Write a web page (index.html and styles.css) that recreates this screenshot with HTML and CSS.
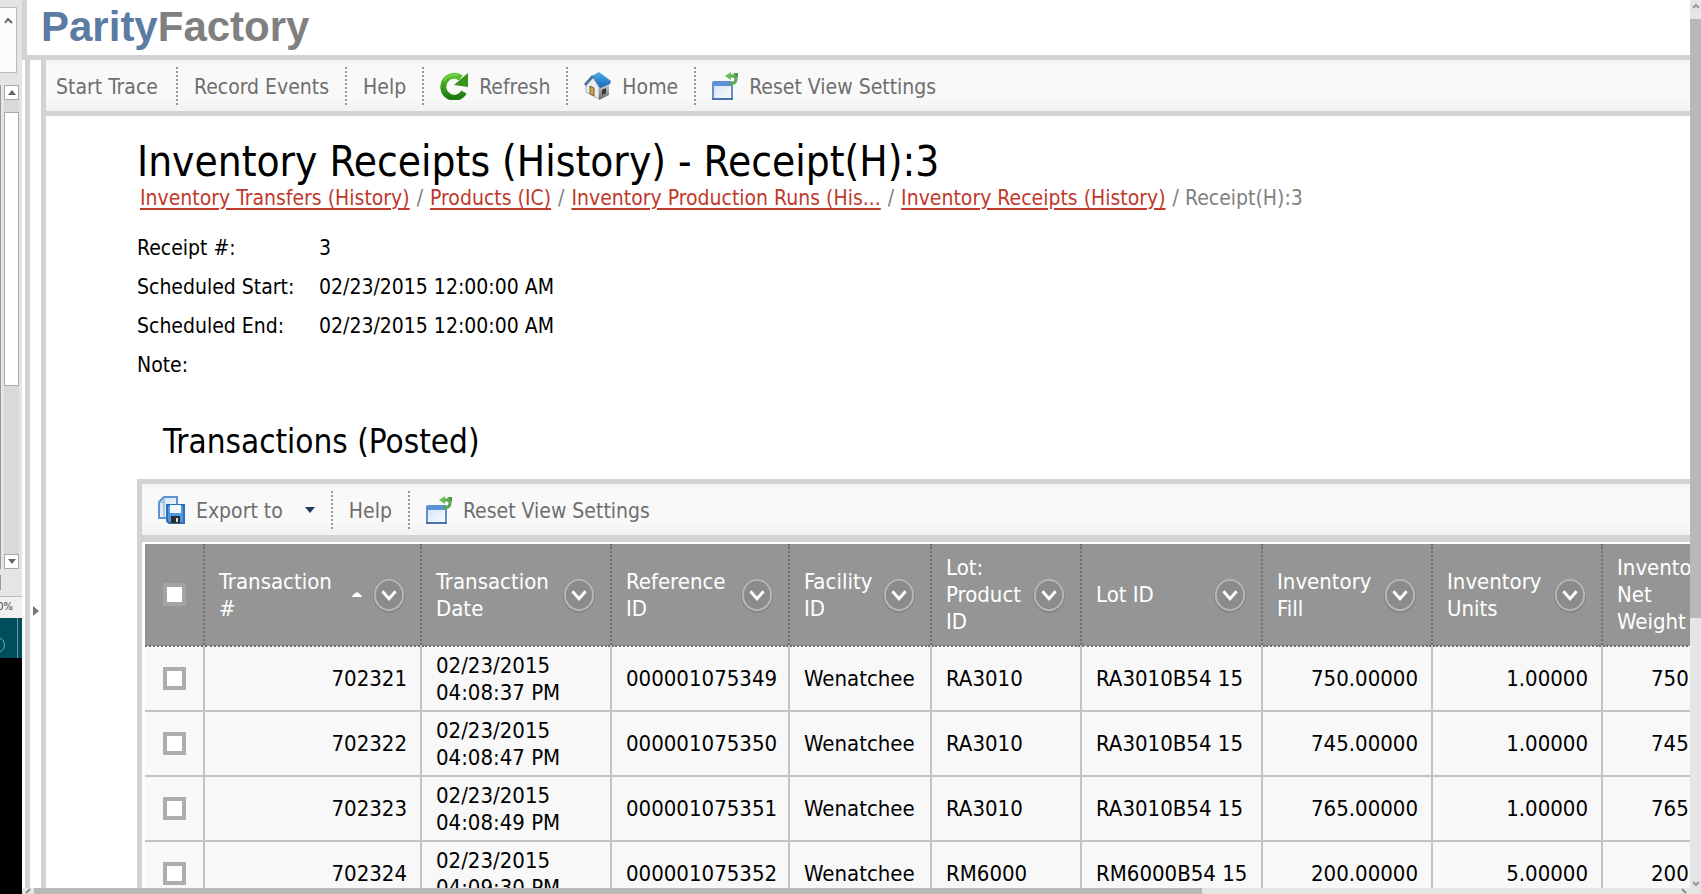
FILE: index.html
```
<!DOCTYPE html>
<html lang="en">
<head>
    <meta charset="UTF-8">
    <title>Inventory Receipts (History) - Receipt(H):3</title>
    <meta name="viewport" content="width=device-width, initial-scale=1.0">
    <link rel="stylesheet" href="styles.css">
</head>
<body>
    <svg class="defs" aria-hidden="true">
        <defs>
            <linearGradient id="green" x1="0" y1="0" x2="0" y2="1">
                <stop offset="0" stop-color="#5cc431"/>
                <stop offset="1" stop-color="#1c7a10"/>
            </linearGradient>
            <linearGradient id="blue" x1="0" y1="0" x2="0" y2="1">
                <stop offset="0" stop-color="#4dabee"/>
                <stop offset="1" stop-color="#1467b4"/>
            </linearGradient>
            <linearGradient id="pale" x1="0" y1="0" x2="1" y2="1">
                <stop offset="0" stop-color="#cfe0f5"/>
                <stop offset="1" stop-color="#fdfeff"/>
            </linearGradient>
            <linearGradient id="wall" x1="0" y1="0" x2="0" y2="1">
                <stop offset="0" stop-color="#d8d8da"/>
                <stop offset="1" stop-color="#606060"/>
            </linearGradient>
        </defs>
        <symbol id="icon-down" viewBox="0 0 36 38">
            <ellipse cx="18" cy="20" rx="17" ry="18" fill="#868686"/>
            <ellipse cx="18" cy="19" rx="15" ry="16" fill="#8b8b8b" stroke="#b8b8b8" stroke-width="2"/>
            <path d="M11 15l7 8 7-8" fill="none" stroke="#fff" stroke-width="3"/>
        </symbol>
        <symbol id="icon-reset" viewBox="0 0 26 28">
            <rect x="1" y="10" width="19" height="17" rx="1" fill="url(#pale)" stroke="#6590cc" stroke-width="2"/>
            <path d="M1 9h19v5H1z" fill="#5e92d8"/>
            <path d="M0 27h21" stroke="#4a72ad" stroke-width="2"/>
            <path d="M17 4h4q3 0 3 3 0 5-7 5" fill="none" stroke="#59a84e" stroke-width="3"/>
            <path d="M13 4l6-4v8z" fill="#6cbd5c"/>
            <path d="M21 1h5v5z" fill="#4a9640"/>
        </symbol>
    </svg>

    <div class="desktop">
        <aside class="behind">
            <div class="behind-box">
                <svg width="9" height="7" viewBox="0 0 9 7"><path d="M1 6l3-4 4 4" fill="none" stroke="#666" stroke-width="2"/></svg>
            </div>
            <div class="behind-track">
                <div class="track-button"><svg width="8" height="5" viewBox="0 0 8 5"><path d="M0 5l4-5 4 5z" fill="#666"/></svg></div>
                <div class="track-thumb"></div>
                <div class="track-button track-end"><svg width="8" height="5" viewBox="0 0 8 5"><path d="M0 0l4 5 4-5z" fill="#666"/></svg></div>
            </div>
            <div class="behind-tab"></div>
            <div class="behind-zoom">0%</div>
            <div class="behind-task"><span></span></div>
            <div class="behind-screen"></div>
        </aside>

        <div class="window">
            <header class="banner"><span class="brand">Parity</span>Factory</header>
            <div class="frame">
                <div class="splitter">
                    <svg width="6" height="10" viewBox="0 0 6 10"><path d="M0 0l6 5-6 5z" fill="#777"/></svg>
                </div>
                <main class="content">
                    <nav class="toolbar">
                        <button class="tool first">Start Trace</button>
                        <button class="tool">Record Events</button>
                        <button class="tool">Help</button>
                        <button class="tool">
                            <svg width="28" height="28" viewBox="0 0 28 28">
                                <path d="M24 20a11 11 0 1 1-3-14" fill="none" stroke="url(#green)" stroke-width="6"/>
                                <path d="M28 1v14l-14-2z" fill="#36931c"/>
                                <path d="M4 9q5-8 14-6" fill="none" stroke="#8bdf62"/>
                            </svg>
                            Refresh
                        </button>
                        <button class="tool">
                            <svg width="27" height="28" viewBox="0 0 27 28">
                                <path d="M2 11l6-6 7 10v12L2 20z" fill="#e9edf2" stroke="#a9afb8"/>
                                <path d="M15 15l10-4v12l-10 5z" fill="url(#wall)"/>
                                <path d="M8 4l7-4 12 9-1 3-10 4z" fill="url(#blue)"/>
                                <path d="M0 12l8-9 2 2-8 9z" fill="#4a7396"/>
                                <path d="M6 14l4 2v8l-4-2z" fill="#d8a52b" stroke="#6b6248"/>
                                <path d="M18 18l4-2v5l-4 2z" fill="#353535"/>
                            </svg>
                            Home
                        </button>
                        <button class="tool"><svg width="26" height="28"><use href="#icon-reset"/></svg>Reset View Settings</button>
                    </nav>

                    <div class="page">
                        <h1>Inventory Receipts (History) - Receipt(H):3</h1>
                        <div class="breadcrumb">
                            <a href="#">Inventory Transfers (History)</a> /
                            <a href="#">Products (IC)</a> /
                            <a href="#">Inventory Production Runs (His...</a> /
                            <a href="#">Inventory Receipts (History)</a> /
                            Receipt(H):3
                        </div>

                        <dl class="details">
                            <dt>Receipt #:</dt><dd>3</dd>
                            <dt>Scheduled Start:</dt><dd>02/23/2015 12:00:00 AM</dd>
                            <dt>Scheduled End:</dt><dd>02/23/2015 12:00:00 AM</dd>
                            <dt>Note:</dt><dd></dd>
                        </dl>

                        <h2>Transactions (Posted)</h2>

                        <section class="grid">
                            <div class="toolbar">
                                <button class="tool">
                                    <svg width="27" height="28" viewBox="0 0 27 28">
                                        <path d="M1 6l5-5h13v21H1z" fill="url(#pale)" stroke="#5b93d3" stroke-width="2"/>
                                        <path d="M6 1v21M1 6h5" stroke="#7ba9dd" fill="none"/>
                                        <path d="M9 9h17v18H11l-2-2z" fill="#4c9be0" stroke="#2e6fb3" stroke-width="2"/>
                                        <path d="M12 9h11v8H12z" fill="#f2f7fc"/>
                                        <path d="M13 20h9v7h-9z" fill="#2d2d2d"/>
                                        <path d="M18 22h2v4h-2z" fill="#ddd"/>
                                    </svg>
                                    Export to
                                    <svg class="caret" width="10" height="6" viewBox="0 0 10 6"><path d="M0 0h10L5 6z" fill="#223a63"/></svg>
                                </button>
                                <button class="tool">Help</button>
                                <button class="tool"><svg width="26" height="28"><use href="#icon-reset"/></svg>Reset View Settings</button>
                            </div>
                            <table>
                                <colgroup>
                                    <col class="c-check"><col class="c-number"><col class="c-date"><col class="c-ref"><col class="c-facility">
                                    <col class="c-product"><col class="c-lot"><col class="c-amount"><col class="c-amount"><col class="c-amount">
                                </colgroup>
                                <thead>
                                    <tr>
                                        <th><input type="checkbox" aria-label="Select all"></th>
                                        <th><div class="head">Transaction #<svg class="sort" width="10" height="5" viewBox="0 0 10 5"><path d="M0 5q0-2 5-5 5 3 5 5z" fill="#fff"/></svg><button aria-label="Transaction # menu"><svg><use href="#icon-down"/></svg></button></div></th>
                                        <th><div class="head">Transaction Date<button aria-label="Transaction Date menu"><svg><use href="#icon-down"/></svg></button></div></th>
                                        <th><div class="head">Reference ID<button aria-label="Reference ID menu"><svg><use href="#icon-down"/></svg></button></div></th>
                                        <th><div class="head">Facility ID<button aria-label="Facility ID menu"><svg><use href="#icon-down"/></svg></button></div></th>
                                        <th><div class="head">Lot: Product ID<button aria-label="Lot: Product ID menu"><svg><use href="#icon-down"/></svg></button></div></th>
                                        <th><div class="head">Lot ID<button aria-label="Lot ID menu"><svg><use href="#icon-down"/></svg></button></div></th>
                                        <th><div class="head">Inventory Fill<button aria-label="Inventory Fill menu"><svg><use href="#icon-down"/></svg></button></div></th>
                                        <th><div class="head">Inventory Units<button aria-label="Inventory Units menu"><svg><use href="#icon-down"/></svg></button></div></th>
                                        <th><div class="head">Inventory Net Weight<button aria-label="Inventory Net Weight menu"><svg><use href="#icon-down"/></svg></button></div></th>
                                    </tr>
                                </thead>
                                <tbody>
                                    <tr>
                                        <td><input type="checkbox" aria-label="Select 702321"></td>
                                        <td class="num">702321</td>
                                        <td>02/23/2015 04:08:37 PM</td>
                                        <td>000001075349</td>
                                        <td>Wenatchee</td>
                                        <td>RA3010</td>
                                        <td class="lot">RA3010B54 15</td>
                                        <td class="num">750.00000</td>
                                        <td class="num">1.00000</td>
                                        <td class="num">750.00000</td>
                                    </tr>
                                    <tr>
                                        <td><input type="checkbox" aria-label="Select 702322"></td>
                                        <td class="num">702322</td>
                                        <td>02/23/2015 04:08:47 PM</td>
                                        <td>000001075350</td>
                                        <td>Wenatchee</td>
                                        <td>RA3010</td>
                                        <td class="lot">RA3010B54 15</td>
                                        <td class="num">745.00000</td>
                                        <td class="num">1.00000</td>
                                        <td class="num">745.00000</td>
                                    </tr>
                                    <tr>
                                        <td><input type="checkbox" aria-label="Select 702323"></td>
                                        <td class="num">702323</td>
                                        <td>02/23/2015 04:08:49 PM</td>
                                        <td>000001075351</td>
                                        <td>Wenatchee</td>
                                        <td>RA3010</td>
                                        <td class="lot">RA3010B54 15</td>
                                        <td class="num">765.00000</td>
                                        <td class="num">1.00000</td>
                                        <td class="num">765.00000</td>
                                    </tr>
                                    <tr>
                                        <td><input type="checkbox" aria-label="Select 702324"></td>
                                        <td class="num">702324</td>
                                        <td>02/23/2015 04:09:30 PM</td>
                                        <td>000001075352</td>
                                        <td>Wenatchee</td>
                                        <td>RM6000</td>
                                        <td class="lot">RM6000B54 15</td>
                                        <td class="num">200.00000</td>
                                        <td class="num">5.00000</td>
                                        <td class="num">200.00000</td>
                                    </tr>
                                </tbody>
                            </table>
                        </section>
                    </div>
                </main>
            </div>
            <div class="scroll-x">
                <svg width="12" height="6" viewBox="0 0 12 6"><path d="M8 1L4 5" stroke="#888" stroke-width="2"/></svg>
                <div class="thumb"></div>
                <svg width="12" height="6" viewBox="0 0 12 6"><path d="M4 1l4 4" stroke="#888" stroke-width="2"/></svg>
            </div>
        </div>

        <div class="scroll-y">
            <svg width="11" height="19" viewBox="0 0 11 19"><path d="M3 8l3-3 3 3" fill="none" stroke="#999" stroke-width="2"/></svg>
            <div class="thumb"></div>
            <svg width="11" height="19" viewBox="0 0 11 19"><path d="M3 7l3 3 3-3" fill="none" stroke="#999" stroke-width="2"/></svg>
        </div>
    </div>
</body>
</html>
```
FILE: styles.css
```
* {
    box-sizing: border-box;
}

body {
    margin: 0;
    background: #fff;
    color: #000;
    font-family: Tahoma, "DejaVu Sans Condensed", "DejaVu Sans", sans-serif;
    font-size: 21px;
    line-height: 27px;
    overflow: hidden;
}

button {
    font: inherit;
    color: inherit;
    border: none;
    padding: 0;
    background: none;
    cursor: pointer;
}

svg {
    flex: none;
    display: block;
}

.defs {
    width: 0;
    height: 0;
    position: absolute;
}

.desktop {
    display: flex;
    height: 100vh;
}

/* slice of the window behind */
.behind {
    flex: none;
    width: 22px;
    display: flex;
    flex-direction: column;
    background: #e5e5e5;
    overflow: hidden;
}

.behind-box {
    flex: none;
    width: 17px;
    height: 66px;
    margin-top: 7px;
    padding: 9px 0 0 4px;
    background: #fcfcfc;
    border: 1px solid #bbb;
    border-left: none;
}

.behind-track {
    flex: none;
    height: 484px;
    margin-top: 12px;
    padding: 0 3px 0 4px;
    display: flex;
    flex-direction: column;
    background: linear-gradient(to right, #999 1px, #e5e5e5 1px, #e5e5e5 4px, #d9d9d9 4px, #d9d9d9 19px, #e5e5e5 19px);
}

.track-button {
    flex: none;
    height: 15px;
    display: flex;
    align-items: center;
    justify-content: center;
    background: #fff;
    border: 1px solid #aaa;
}

.track-thumb {
    height: 274px;
    margin-top: 12px;
    background: #fff;
    border: 1px solid #aaa;
}

.track-end {
    margin-top: auto;
}

.behind-tab {
    width: 1px;
    height: 15px;
    margin: 6px 0;
    background: #999;
}

.behind-zoom {
    flex: none;
    height: 22px;
    padding-right: 9px;
    display: flex;
    justify-content: flex-end;
    background: #f0f0f0;
    border-top: 1px solid #bbb;
    color: #444;
    font-size: 11px;
    line-height: 20px;
}

.behind-task {
    flex: none;
    height: 40px;
    padding-top: 19px;
    overflow: hidden;
    background: linear-gradient(to right, #004d5e 17px, #6b98a2 17px, #6b98a2 18px, #004d5e 18px);
}

.behind-task span {
    display: block;
    width: 16px;
    height: 16px;
    margin-left: -11px;
    border: 1px solid #6fa8b3;
    border-radius: 50%;
}

.behind-screen {
    flex: 1;
    background: #000;
}

.window {
    flex: 1;
    min-width: 0;
    display: flex;
    flex-direction: column;
}

.banner {
    flex: none;
    height: 60px;
    padding-left: 14px;
    border-left: 5px solid #d3d3d3;
    border-bottom: 5px solid #d3d3d3;
    color: #808080;
    font: bold 42px/54px "Liberation Sans", Arial, sans-serif;
}

.brand {
    color: #5b7ba3;
}

.frame {
    flex: 1;
    min-height: 0;
    display: flex;
    overflow: hidden;
}

.splitter {
    flex: none;
    width: 21px;
    margin-left: 3px;
    padding-top: 546px;
    display: flex;
    align-items: flex-start;
    justify-content: center;
    border-left: 5px solid #d3d3d3;
    border-right: 5px solid #d3d3d3;
}

.content {
    flex: 1;
    min-width: 0;
    overflow: hidden;
}

.toolbar {
    height: 56px;
    display: flex;
    align-items: center;
    border-bottom: 5px solid #d3d3d3;
    background: linear-gradient(#f2f2f2, #f9f9f9 6px, #f9f9f9 38px, #f2f2f2);
    color: #6e6e6e;
}

.tool {
    height: 38px;
    padding: 4px 16px 0;
    display: flex;
    align-items: center;
    gap: 11px;
    white-space: nowrap;
}

.tool svg {
    margin-bottom: 4px;
}

.tool.first {
    padding-left: 10px;
    padding-right: 18px;
}

.tool + .tool {
    border-left: 2px dotted #999;
}

.tool .caret {
    margin-left: 11px;
}

.page {
    padding: 24px 0 0 91px;
}

h1 {
    margin: 0;
    font-size: 42px;
    font-weight: normal;
    line-height: 44px;
}

.breadcrumb {
    padding: 1px 0 0 2px;
    color: #808080;
    white-space: nowrap;
}

.breadcrumb a {
    margin: 0 1px;
    color: #c0392b;
    text-decoration-thickness: 2px;
    text-underline-offset: 3px;
}

.details {
    margin: 17px 0 0;
    display: grid;
    grid-template-columns: 182px 1fr;
    grid-auto-rows: 39px;
    align-items: center;
}

.details dd {
    margin: 0;
}

h2 {
    margin: 37px 0 17px 26px;
    font-size: 33px;
    font-weight: normal;
    line-height: 40px;
}

.grid {
    border-top: 5px solid #d3d3d3;
    border-left: 5px solid #d3d3d3;
    overflow: hidden;
}

.grid .toolbar {
    height: 58px;
    border-bottom-width: 7px;
}

table {
    width: 1627px;
    margin: 2px 0 0 3px;
    table-layout: fixed;
    border-collapse: collapse;
    font-size: 22px;
}

.c-check { width: 59px; }
.c-number { width: 217px; }
.c-date { width: 190px; }
.c-ref { width: 178px; }
.c-facility { width: 142px; }
.c-product { width: 150px; }
.c-lot { width: 181px; }
.c-amount { width: 170px; }

th {
    height: 102px;
    padding: 0 14px;
    background: #959595;
    border-right: 2px dotted #6e6e6e;
    border-bottom: 2px dotted #6e6e6e;
    color: #fff;
    font-weight: normal;
    text-align: left;
}

.head {
    display: flex;
    align-items: center;
    gap: 4px;
}

.head button {
    flex: none;
    margin-left: auto;
}

.head button svg {
    width: 34px;
    height: 36px;
}

.head .sort {
    margin: 0 6px 0 auto;
}

.head .sort + button {
    margin-left: 0;
}

td {
    height: 65px;
    padding: 0 13px 0 14px;
    background: #f8f8f8;
    border-right: 2px solid #c3c3c3;
    border-bottom: 2px solid #c3c3c3;
}

.num {
    text-align: right;
}

.lot {
    white-space: nowrap;
}

input[type="checkbox"] {
    appearance: none;
    display: block;
    width: 23px;
    height: 23px;
    margin: 0 auto;
    background: #fff;
    border: 4px solid #adadad;
}

th input[type="checkbox"] {
    border-color: #a3a3a3;
}

th:first-child,
td:first-child {
    padding: 0;
}

.scroll-x {
    flex: none;
    height: 6px;
    display: flex;
    background: #e5e5e5;
}

.scroll-x .thumb {
    width: 70%;
    margin-right: auto;
    background: #b8b8b8;
}

.scroll-y {
    flex: none;
    width: 11px;
    display: flex;
    flex-direction: column;
    background: #e5e5e5;
}

.scroll-y .thumb {
    height: 67%;
    margin-bottom: auto;
    background: #b8b8b8;
}
```
